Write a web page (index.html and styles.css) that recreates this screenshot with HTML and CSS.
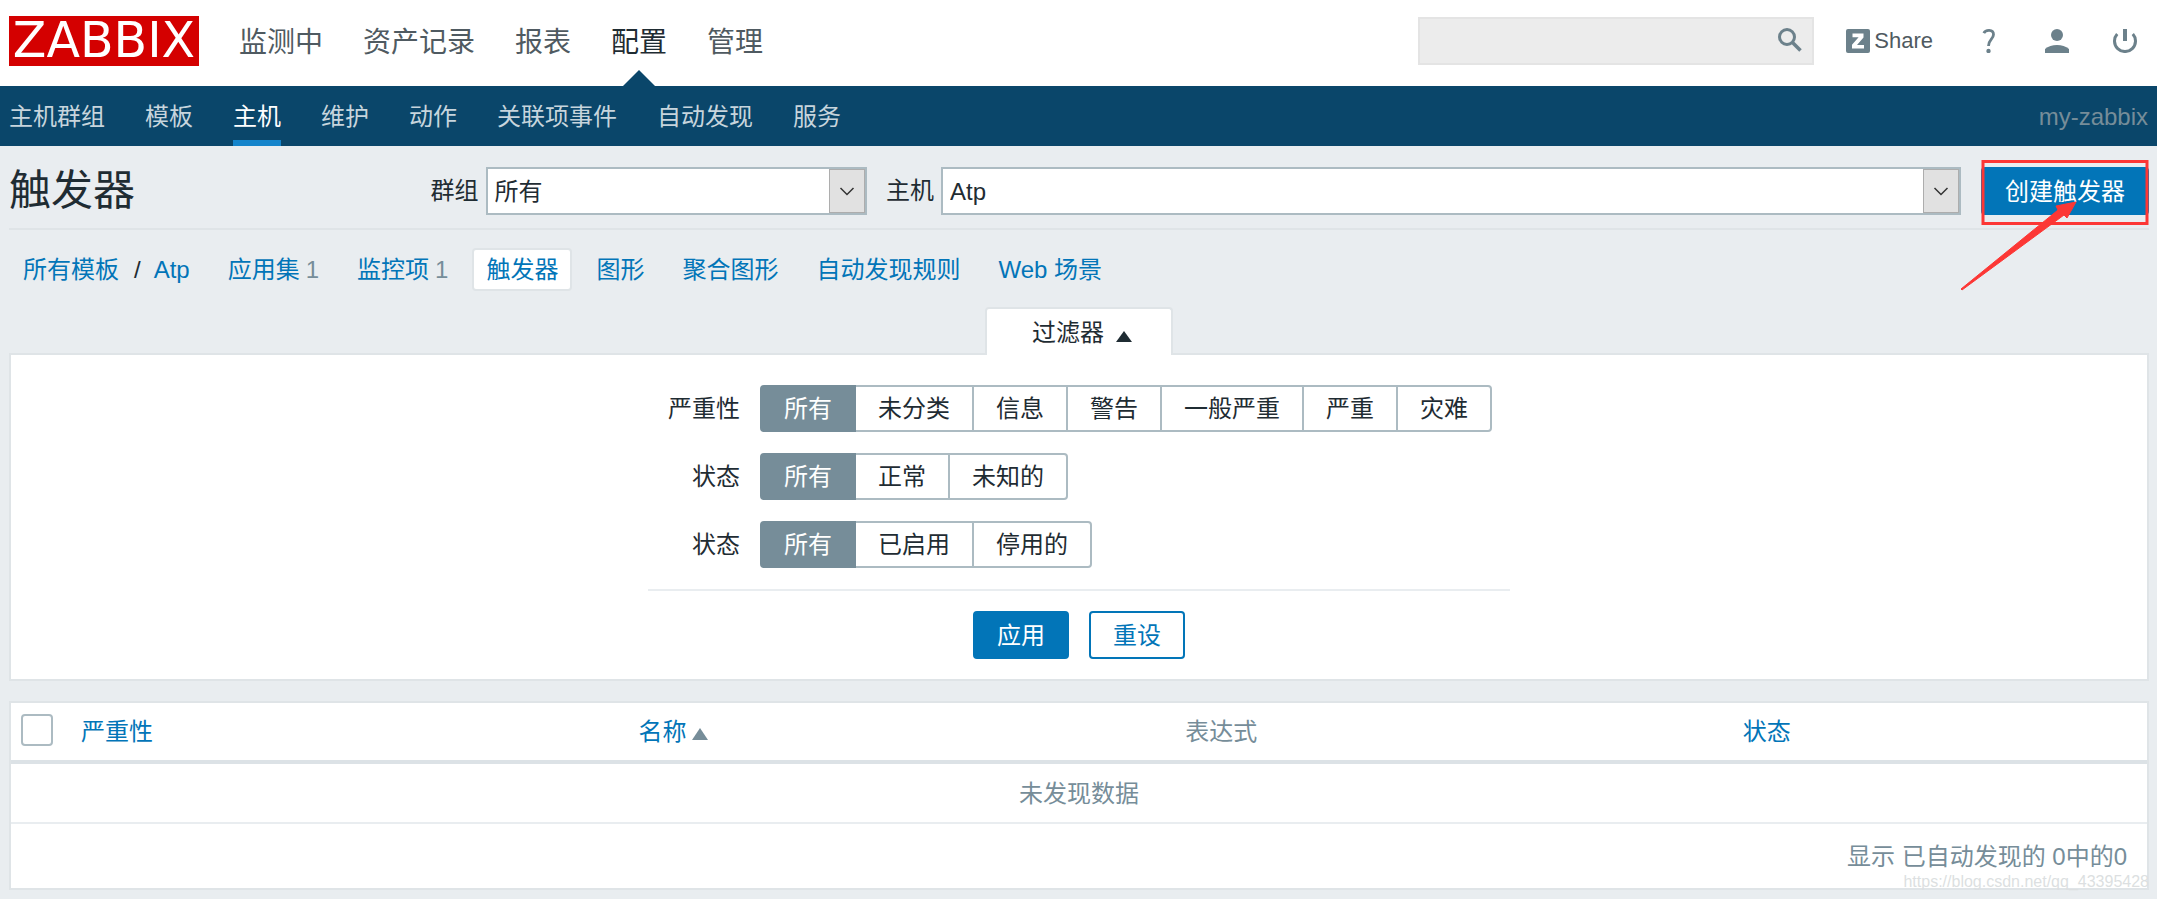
FILE: index.html
```html
<!DOCTYPE html>
<html lang="zh-CN">
<head>
<meta charset="utf-8">
<title>触发器</title>
<link rel="stylesheet" href="styles.css">
</head>
<body>
<header class="top">
  <a class="logo" href="#">ZABBIX</a>
  <nav class="menu">
    <a href="#">监测中</a>
    <a href="#">资产记录</a>
    <a href="#">报表</a>
    <a href="#" class="active">配置</a>
    <a href="#">管理</a>
  </nav>
  <form class="search">
    <input type="text" aria-label="搜索">
    <button type="button" aria-label="搜索">
      <svg width="24" height="24" viewBox="0 0 24 24"><circle cx="9" cy="9" r="7.5" fill="none" stroke="#6c818b" stroke-width="3"/><path d="M14.500 14.500L22.500 22.500" stroke="#6c818b" stroke-width="3.500"/></svg>
    </button>
  </form>
  <div class="tools">
    <a class="share" href="#"><svg width="24" height="24" viewBox="0 0 24 24"><rect width="24" height="24" rx="2" fill="#6c818b"/><path d="M6.500 4.500H17.500V8.500L11 16H18V19.500H6V15.800L12.600 8.200H6.500Z" fill="#fff"/></svg>Share</a>
    <a href="#" aria-label="帮助"><svg width="24" height="24" viewBox="-6 0 24 24"><path d="M.8 4.200C2.500 .6 10.500 0 10.500 5.500C10.500 10 5.500 10.500 5.500 17" fill="none" stroke="#6c818b" stroke-width="2.800"/><circle cx="5.500" cy="22" r="2.200" fill="#6c818b"/></svg></a>
    <a href="#" aria-label="用户"><svg width="24" height="24" viewBox="0 0 24 24"><circle cx="12" cy="6" r="6" fill="#6c818b"/><path d="M0 24V20C6 14.500 18 14.500 24 20V24Z" fill="#6c818b"/></svg></a>
    <a href="#" aria-label="退出"><svg width="24" height="24" viewBox="0 0 24 24"><path d="M4.200 5A10.500 10.500 0 1 0 19.800 5" fill="none" stroke="#6c818b" stroke-width="3"/><path d="M12 0V12" stroke="#6c818b" stroke-width="4"/></svg></a>
  </div>
</header>
<nav class="subnav">
  <a href="#">主机群组</a>
  <a href="#">模板</a>
  <a href="#" class="active">主机</a>
  <a href="#">维护</a>
  <a href="#">动作</a>
  <a href="#">关联项事件</a>
  <a href="#">自动发现</a>
  <a href="#">服务</a>
  <span class="server">my-zabbix</span>
</nav>
<main>
  <div class="page-head">
    <h1>触发器</h1>
    <form class="picker">
      <label for="group">群组</label>
      <div class="select group"><select id="group"><option>所有</option></select><svg viewBox="0 0 36 44"><rect x=".5" y=".5" width="35" height="43" fill="#e1e1e1" stroke="#adadad"/><path d="M11.500 19L18 25.500L24.500 19" fill="none" stroke="#333" stroke-width="1.500"/></svg></div>
      <label for="host">主机</label>
      <div class="select host"><select id="host"><option>Atp</option></select><svg viewBox="0 0 36 44"><rect x=".5" y=".5" width="35" height="43" fill="#e1e1e1" stroke="#adadad"/><path d="M11.500 19L18 25.500L24.500 19" fill="none" stroke="#333" stroke-width="1.500"/></svg></div>
      <div class="create">
        <button type="button" class="btn primary">创建触发器</button>
        <svg class="mark" width="190" height="136" viewBox="0 0 190 136"><path d="M23 6.500H187V68.500H23Z" fill="none" stroke="#fc3735" stroke-width="3"/><path d="M1 134L98 55L96 51L116 47L107 63L104 60L2 135Z" fill="#fc3735" stroke="#fc3735"/></svg>
      </div>
    </form>
  </div>
  <nav class="crumbs">
    <span class="path"><a href="#">所有模板</a><span class="slash">/</span><a href="#">Atp</a></span>
    <span><a href="#">应用集</a><sup>1</sup></span>
    <span><a href="#">监控项</a><sup>1</sup></span>
    <span class="selected"><a href="#">触发器</a></span>
    <span><a href="#">图形</a></span>
    <span><a href="#">聚合图形</a></span>
    <span><a href="#">自动发现规则</a></span>
    <span><a href="#">Web 场景</a></span>
  </nav>
  <button type="button" class="filter-tab">过滤器<svg width="16" height="11" viewBox="0 0 16 11"><path d="M8 0L16 11H0Z" fill="#1f2c33"/></svg></button>
  <form class="filter">
    <div class="filter-rows">
      <fieldset>
        <legend>严重性</legend>
        <div class="seg">
          <label><input type="radio" name="sev" checked>所有</label><label><input type="radio" name="sev">未分类</label><label><input type="radio" name="sev">信息</label><label><input type="radio" name="sev">警告</label><label><input type="radio" name="sev">一般严重</label><label><input type="radio" name="sev">严重</label><label><input type="radio" name="sev">灾难</label>
        </div>
      </fieldset>
      <fieldset>
        <legend>状态</legend>
        <div class="seg">
          <label><input type="radio" name="state" checked>所有</label><label><input type="radio" name="state">正常</label><label><input type="radio" name="state">未知的</label>
        </div>
      </fieldset>
      <fieldset>
        <legend>状态</legend>
        <div class="seg">
          <label><input type="radio" name="status" checked>所有</label><label><input type="radio" name="status">已启用</label><label><input type="radio" name="status">停用的</label>
        </div>
      </fieldset>
    </div>
    <div class="actions">
      <button type="button" class="btn primary">应用</button>
      <button type="button" class="btn">重设</button>
    </div>
  </form>
  <table class="list">
    <colgroup><col class="c-check"><col class="c-wide"><col class="c-mid"><col class="c-wide"><col></colgroup>
    <thead>
      <tr>
        <th><input type="checkbox" aria-label="全选"></th>
        <th><a href="#">严重性</a></th>
        <th><a href="#">名称</a><svg width="16" height="12" viewBox="0 0 16 12"><path d="M8 0L16 12H0Z" fill="#768d99"/></svg></th>
        <th>表达式</th>
        <th><a href="#">状态</a></th>
      </tr>
    </thead>
    <tbody>
      <tr><td class="empty" colspan="5">未发现数据</td></tr>
    </tbody>
    <tfoot>
      <tr><td class="count" colspan="5">显示 已自动发现的 0中的0</td></tr>
    </tfoot>
  </table>
  <div class="watermark">https://blog.csdn.net/qq_43395428</div>
</main>
</body>
</html>
```

FILE: styles.css
```css
* { box-sizing: border-box; }
body {
  margin: 0;
  background: #e9edf0;
  color: #1f2c33;
  font: 24px/32px "Liberation Sans", "Noto Sans CJK SC", sans-serif;
}
a { color: #0275b8; text-decoration: none; }
input, select, button { font: inherit; color: inherit; margin: 0; }
svg { display: block; flex: none; }

.top {
  display: flex;
  align-items: center;
  height: 86px;
  padding: 0 20px 4px 9px;
  background: #fff;
}
.logo {
  width: 190px;
  height: 50px;
  background: #d40000;
  color: #fff;
  font: 49px/50px "DejaVu Sans", sans-serif;
  text-align: center;
}
.menu { display: flex; gap: 40px; margin-left: 40px; padding-top: 4px; font-size: 28px; }
.menu a { position: relative; color: #4f5a61; }
.menu .active { color: #1f2c33; }
.menu .active::after {
  content: "";
  position: absolute;
  left: 50%;
  bottom: -27px;
  margin-left: -16px;
  border: 16px solid transparent;
  border-top: 0;
  border-bottom-color: #0a466a;
}
.search { position: relative; width: 396px; margin-left: auto; }
.search input {
  display: block;
  width: 100%;
  height: 48px;
  padding: 0 48px 0 10px;
  border: 2px solid #e4e4e4;
  background: #ececec;
}
.search button {
  position: absolute;
  right: 12px;
  top: 11px;
  padding: 0;
  border: 0;
  background: none;
}
.tools { display: flex; align-items: center; margin-left: 32px; gap: 44px; }
.tools .share { display: flex; align-items: center; gap: 4px; font-size: 22px; color: #4f5a61; }

.subnav {
  display: flex;
  gap: 40px;
  height: 60px;
  padding: 0 9px;
  background: #0a466a;
}
.subnav a { padding-top: 15px; color: #c7d5dd; }
.subnav .active { color: #fff; border-bottom: 6px solid #1484cb; }
.server { margin-left: auto; padding-top: 15px; color: #768d99; }

main { position: relative; padding: 0 8px 8px 9px; }
.page-head {
  display: flex;
  align-items: center;
  justify-content: space-between;
  height: 84px;
  padding-top: 8px;
  border-bottom: 2px solid #dfe4e7;
}
h1 { margin: 0; font-size: 42px; font-weight: 400; line-height: 48px; }
.picker { display: flex; align-items: center; width: 80.3%; gap: 7px; }
.picker label[for="host"] { margin-left: 12px; }
.select { position: relative; }
.select.group { width: 22.2%; }
.select.host { flex: 1; }
.select select {
  display: block;
  appearance: none;
  width: 100%;
  height: 48px;
  padding: 2px 44px 0 7px;
  border: 2px solid #acbbc2;
  border-radius: 0;
  background: #fff;
}
.select svg {
  position: absolute;
  right: 2px;
  top: 2px;
  width: 36px;
  height: 44px;
  pointer-events: none;
}
.create { position: relative; margin-left: 13px; }
.mark { position: absolute; right: -1px; top: -12px; pointer-events: none; }
.btn {
  display: block;
  height: 48px;
  padding: 1px 22px 0;
  border: 2px solid #0275b8;
  border-radius: 4px;
  background: #fff;
  color: #0275b8;
}
.btn.primary { background: #0275b8; color: #fff; }

.crumbs { display: flex; gap: 10px; padding-top: 18px; }
.crumbs > span {
  height: 43px;
  padding: 4px 12px;
  border: 2px solid transparent;
  border-radius: 4px;
  white-space: nowrap;
}
.crumbs .selected { background: #fff; border-color: #dfe4e7; }
.slash { margin: 0 13px 0 15px; }
.crumbs sup { margin-left: 6px; font: inherit; vertical-align: baseline; color: #768d99; }

.filter-tab {
  position: relative;
  display: flex;
  align-items: center;
  justify-content: center;
  gap: 12px;
  width: 188px;
  height: 48px;
  margin: 16px auto -2px;
  padding: 2px 0 0 6px;
  border: 2px solid #dfe4e7;
  border-bottom: 0;
  border-radius: 4px 4px 0 0;
  background: #fff;
}
.filter-tab svg { margin-top: 6px; }
.filter {
  display: flex;
  flex-direction: column;
  align-items: center;
  padding: 30px 0 20px;
  border: 2px solid #dfe4e7;
  background: #fff;
}
.filter-rows {
  display: grid;
  gap: 21px;
  padding: 0 18px 21px 20px;
  border-bottom: 2px solid #e9edf0;
}
fieldset { display: flex; align-items: center; margin: 0; padding: 0; border: 0; min-width: 0; }
legend { float: left; width: 72px; padding: 0; margin-right: 20px; text-align: right; }
.seg { display: flex; }
.seg label {
  height: 47px;
  margin-left: -2px;
  padding: 6px 22px 0;
  border: 2px solid #acbbc2;
}
.seg label:first-child { margin-left: 0; border-radius: 4px 0 0 4px; }
.seg label:last-child { border-radius: 0 4px 4px 0; }
.seg label:has(:checked) { position: relative; background: #768d99; border-color: #768d99; color: #fff; }
.seg input { position: absolute; opacity: 0; }
.actions { display: flex; gap: 20px; padding-top: 20px; }

.list {
  width: 100%;
  margin-top: 20px;
  table-layout: fixed;
  border-collapse: separate;
  border-spacing: 0;
  border: 2px solid #dfe4e7;
  background: #fff;
  color: #768d99;
}
.c-check { width: 60px; }
.c-wide { width: 26.1%; }
.c-mid { width: 25.6%; }
.list th { height: 61px; padding: 0 10px; border-bottom: 4px solid #dce2e6; font-weight: 400; text-align: left; }
.list th svg { display: inline-block; margin-left: 6px; }
.list input {
  display: block;
  appearance: none;
  width: 32px;
  height: 32px;
  margin-bottom: 4px;
  border: 2px solid #acbbc2;
  border-radius: 4px;
  background: #fff;
}
.list .empty { height: 60px; padding: 2px 0 0; border-bottom: 2px solid #e9edf0; text-align: center; }
.list .count { height: 64px; padding: 2px 20px 0; text-align: right; }
.watermark {
  position: absolute;
  right: 8px;
  bottom: 6px;
  font-size: 16px;
  line-height: 20px;
  color: #dcdfe1;
}
```
